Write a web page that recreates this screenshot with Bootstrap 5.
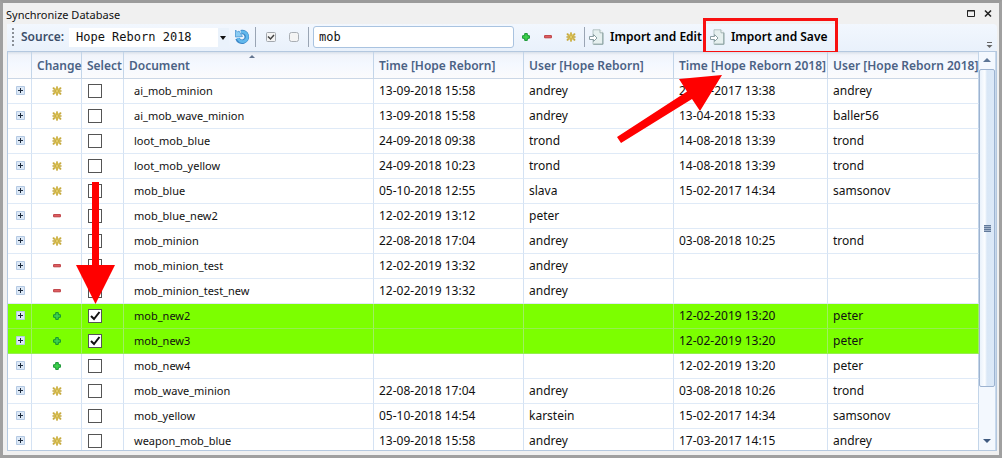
<!DOCTYPE html>
<html lang="en">
<head>
<meta charset="utf-8">
<meta name="viewport" content="width=device-width, initial-scale=1">
<title>Synchronize Database</title>
<link href="https://cdn.jsdelivr.net/npm/bootstrap@5.3.0/dist/css/bootstrap.min.css" rel="stylesheet">
<style>
body{font-family:"Noto Sans","Open Sans",sans-serif;font-size:12px;line-height:16px;color:#111;background:#f0f0f0}
.win{border:3px solid #a0a0a0;border-top-color:#9b9b9b;padding:0 2px 4px 4px}
.title-row{height:21px;padding:4px 0 0 0;margin-left:-1px;font-size:11px}
.tool{background:linear-gradient(#f2f7fe,#e9f1fb);height:27px;border-radius:0 4px 4px 0;padding-left:5px}
.tool button,.gridbox button{border:0;background:none;padding:0;line-height:0;color:inherit}
.grip{width:2px;height:18px;margin-right:7px;background:repeating-linear-gradient(#8a8f96 0 2px,transparent 2px 4px)}
.src-label{font-weight:600;color:#3c4e6a;width:48px}
.mono{font-family:"DejaVu Sans Mono","Liberation Mono",monospace;font-size:12px}
.src{width:160px;height:19px;line-height:19px;border:0;border-radius:0;padding:0 12px 0 7px;appearance:none;color:#111;
background:linear-gradient(#eaf2fb,#eaf2fb) right/11px 100% no-repeat #fff}
.srcwrap::after{content:"";position:absolute;right:3px;top:8px;border:3px solid transparent;border-top:4px solid #111;border-bottom:0}
.vline{width:1px;height:20px;background:#9aa5b4}
.find{width:201px;height:22px;border:1px solid #a9c3e0;border-radius:3px;padding:0 5px 1px;background:#fff;outline:0;color:#111}
.tool .act{font-weight:600;line-height:16px;color:#000;gap:6px;white-space:nowrap}
.marked::after{content:"";position:absolute;inset:-11px -11px -9px -7px;border:3px solid #f81010}
.gridbox{border:1px solid #b4c8df;background:#fff}
.sync{table-layout:fixed;border-collapse:separate;border-spacing:0;width:100%}
.sync th{height:27px;padding:3px 0 0 5px;font-weight:600;color:#4b6285;white-space:nowrap;border-right:1px solid #c3d5e9;border-bottom:1px solid #cbd7e6;background:linear-gradient(#d9e0ea,#f1f4fa 3px,#f4f8ff 12px,#fbfbfc);position:relative}
.sync td{height:25px;padding:0 0 0 5px;white-space:nowrap;border-right:1px solid #d4e2f3;border-bottom:1px solid #dfeaf7}
.sync td.doc{padding-left:10px;font-size:11px}
.sync td:last-child,.sync th:last-child{border-right-color:#c3d5e9}
.sync .picked td{background:#7cff00;border-right-color:#9ff060;border-bottom-color:#96ee50}
.sync .mid{padding:0 0 0 1px;text-align:center}
.sync .mid svg,.sync .mid button{display:block;margin:auto}
.sorter{position:absolute;left:50%;top:3px;border:3px solid transparent;border-bottom:3px solid #63758f;border-top:0}
.tick{appearance:none;display:block;width:14px;height:14px;margin:0 0 0 1px;border:1px solid #555;border-radius:0;background:#fff}
.tick:checked{background:url("data:image/svg+xml,%3Csvg xmlns='http://www.w3.org/2000/svg' viewBox='0 0 12 12'%3E%3Cpath d='M2 6l3 3 5.500-7' fill='none' stroke='%23111' stroke-width='2'/%3E%3C/svg%3E") center/12px #fff}
.sbar{width:17px;background:#f3f8fe;border-right:1px solid #c8d9ec}
.thumb{flex:0 0 80%;width:16px;border:1px solid #9db3d0;border-radius:2px;background:linear-gradient(90deg,#eaf2fb,#fbfdff 35%,#d9e7f6 50%,#dce9f8)}
.lines{width:7px;height:7px;background:repeating-linear-gradient(#61799a 0 1px,#a3b4cb 1px 2px)}
.pointer{position:absolute;left:0;top:0;pointer-events:none}
</style>
</head>
<body>
<svg class="d-none">
<symbol id="plus" viewBox="0 0 8 8"><path d="M2.700.6h2.600v2.100h2.100v2.600H5.300v2.100H2.700V5.300H.6V2.700h2.100z" fill="#3dd24c" stroke="#169432"/></symbol>
<symbol id="minus" viewBox="0 0 8 8"><path d="M.6 2.600h6.800v2.200H.6z" fill="#e26365" stroke="#bd3d42"/></symbol>
<symbol id="star" viewBox="0 0 10 10"><g stroke="#c2a537" stroke-linecap="round"><path d="M5 1.200v7.600" stroke-width="2"/><path d="M1.600 2.200l6.800 5.600M8.400 2.200L1.600 7.800" stroke-width="2"/><path d="M1 5h8" stroke-width="1.500"/></g><path d="M5 1v8M1.800 2.400l6.400 5.200M8.200 2.400L1.800 7.600" stroke="#ead36c" stroke-width=".8"/></symbol>
<symbol id="expand" viewBox="0 0 9 9"><path d="M.5.5h8v8h-8z" fill="#dce8f6" stroke="#b4c9e3"/><path d="M2 4.500h5M4.500 2v5" stroke="#1c2a3d"/></symbol>
<symbol id="page" viewBox="0 0 15 16"><path d="M4 .8h7l3 3v11.500H4z" fill="#e6f0ef" stroke="#b4c4c4"/><path d="M11 .8v3h3" fill="#fff" stroke="#a0b3b3"/><path d="M13.800 4v11.200H4.500" fill="none" stroke="#8aa2a2"/><path d="M.5 7.500h4V5.500l3.500 3.500-3.500 3.500v-2h-4z" fill="#fff" stroke="#8b9fa3"/></symbol>
</svg>
<div class="win vh-100 d-flex flex-column overflow-hidden position-relative">
  <header class="title-row d-flex justify-content-between">
    <div>Synchronize Database</div>
    <div class="d-flex gap-2 pe-1">
      <svg width="9" height="16" viewBox="0 0 9 16"><path d="M.5 3.500h7v6h-7zM0 4h8" fill="none" stroke="#222"/></svg>
      <svg width="9" height="16" viewBox="0 0 9 16"><path d="M1 3.500l6 6M7 3.500l-6 6" stroke="#222" stroke-width="1.600"/></svg>
    </div>
  </header>
  <div class="tool d-flex align-items-center position-relative flex-shrink-0">
    <span class="grip"></span>
    <label class="src-label" for="src">Source:</label>
    <div class="srcwrap position-relative"><select id="src" class="src mono d-block"><option>Hope Reborn 2018</option></select></div>
    <button type="button" class="ms-1" aria-label="Refresh"><svg width="18" height="18" viewBox="0 0 18 18"><path d="M8 4.200A4.800 4.800 0 1 1 4.500 10.500" fill="none" stroke="#3b87c8" stroke-width="4.600"/><path d="M8 4.200A4.800 4.800 0 1 1 4.900 10" fill="none" stroke="#62b8ec" stroke-width="2.800"/><path d="M2.500 2l2 2L6 3l3.500 5.500-7 .5z" fill="#8accf3" stroke="#4b96d2" stroke-width=".8"/></svg></button>
    <span class="vline ms-1 me-1"></span>
    <button type="button" class="ms-1" aria-label="Select all"><svg width="18" height="12" viewBox="0 0 18 12"><rect x="2.500" y="1.500" width="9" height="9" rx="1" fill="#f4f4f4" stroke="#a3a8ae"/><path d="M4 5.500l2.500 2.500 3.500-4" fill="none" stroke="#444" stroke-width="1.500"/></svg></button>
    <button type="button" class="ms-1" aria-label="Clear selection"><svg width="18" height="12" viewBox="0 0 18 12"><rect x="3.500" y="1.500" width="9" height="9" rx="2" fill="#f4f4f4" stroke="#a9aeb4"/></svg></button>
    <span class="vline ms-1 me-1"></span>
    <input class="find mono" type="text" value="mob" aria-label="Filter">
    <button type="button" class="ms-2" aria-label="Added"><svg width="10" height="8"><use href="#plus" width="8" height="8"/></svg></button>
    <button type="button" class="ms-2 ps-1" aria-label="Removed"><svg width="10" height="8"><use href="#minus" width="8" height="8"/></svg></button>
    <button type="button" class="ms-2 ps-1" aria-label="Changed"><svg width="10" height="10"><use href="#star"/></svg></button>
    <span class="vline ms-2 me-1"></span>
    <button type="button" class="act d-flex align-items-center"><svg width="15" height="16"><use href="#page"/></svg>Import and Edit</button>
    <button type="button" class="act d-flex align-items-center position-relative marked ms-2"><svg width="15" height="16"><use href="#page"/></svg>Import and Save</button>
    <svg class="ms-auto me-1 mt-3" width="7" height="8" viewBox="0 0 7 8"><path d="M1 1.500h5" stroke="#666"/><path d="M.5 4h6l-3 3z" fill="#666"/></svg>
  </div>
  <div class="gridbox d-flex flex-fill overflow-hidden">
    <div class="flex-fill overflow-hidden">
      <table class="sync">
        <colgroup><col style="width:24px"><col style="width:50px"><col style="width:42px"><col><col style="width:150px"><col style="width:150px"><col style="width:154px"><col style="width:151px"></colgroup>
        <thead><tr><th></th><th>Change</th><th>Select</th><th>Document<span class="sorter"></span></th><th>Time [Hope Reborn]</th><th>User [Hope Reborn]</th><th>Time [Hope Reborn 2018]</th><th>User [Hope Reborn 2018]</th></tr></thead>
        <tbody id="rows"></tbody>
      </table>
    </div>
    <div class="sbar d-flex flex-column flex-shrink-0">
      <svg class="flex-shrink-0" width="16" height="17" viewBox="0 0 16 17"><path d="M4 10h8L8 6z" fill="#5c7596"/></svg>
      <div class="thumb d-flex align-items-center justify-content-center"><span class="lines"></span></div>
      <svg class="mt-auto flex-shrink-0" width="16" height="17" viewBox="0 0 16 17"><path d="M4 6h8l-4 4z" fill="#3f5a80"/></svg>
    </div>
  </div>
  <svg class="pointer" width="999" height="455" viewBox="3 3 999 455"><g fill="#f00"><path d="M92 182h7v83h16l-19.500 39L76 265h16z"/><path d="M617 137l70-45.500-8-12.500 43-4-22 36-8-12-71 44z"/></g></svg>
</div>
<script>
const rows = [
  ["star","ai_mob_minion","13-09-2018 15:58","andrey","21-07-2017 13:38","andrey"],
  ["star","ai_mob_wave_minion","13-09-2018 15:58","andrey","13-04-2018 15:33","baller56"],
  ["star","loot_mob_blue","24-09-2018 09:38","trond","14-08-2018 13:39","trond"],
  ["star","loot_mob_yellow","24-09-2018 10:23","trond","14-08-2018 13:39","trond"],
  ["star","mob_blue","05-10-2018 12:55","slava","15-02-2017 14:34","samsonov"],
  ["minus","mob_blue_new2","12-02-2019 13:12","peter","",""],
  ["star","mob_minion","22-08-2018 17:04","andrey","03-08-2018 10:25","trond"],
  ["minus","mob_minion_test","12-02-2019 13:32","andrey","",""],
  ["minus","mob_minion_test_new","12-02-2019 13:32","andrey","",""],
  ["plus","mob_new2","","","12-02-2019 13:20","peter",true],
  ["plus","mob_new3","","","12-02-2019 13:20","peter",true],
  ["plus","mob_new4","","","12-02-2019 13:20","peter"],
  ["star","mob_wave_minion","22-08-2018 17:04","andrey","03-08-2018 10:26","trond"],
  ["star","mob_yellow","05-10-2018 14:54","karstein","15-02-2017 14:34","samsonov"],
  ["star","weapon_mob_blue","13-09-2018 15:58","andrey","17-03-2017 14:15","andrey"]
];
document.getElementById("rows").innerHTML = rows.map(([icon, doc, t1, u1, t2, u2, on]) => {
  const size = icon === "star" ? 10 : 8;
  return `<tr class="${on ? "picked" : ""}">
    <td class="mid"><button type="button" aria-label="Expand ${doc}"><svg width="9" height="9"><use href="#expand"/></svg></button></td>
    <td class="mid"><svg width="${size}" height="${size}"><use href="#${icon}"/></svg></td>
    <td><input class="tick" type="checkbox" aria-label="Select ${doc}" ${on ? "checked" : ""}></td>
    <td class="doc">${doc}</td><td>${t1}</td><td>${u1}</td><td>${t2}</td><td>${u2}</td></tr>`;
}).join("");
</script>
<script src="https://cdn.jsdelivr.net/npm/bootstrap@5.3.0/dist/js/bootstrap.bundle.min.js"></script>
</body>
</html>
